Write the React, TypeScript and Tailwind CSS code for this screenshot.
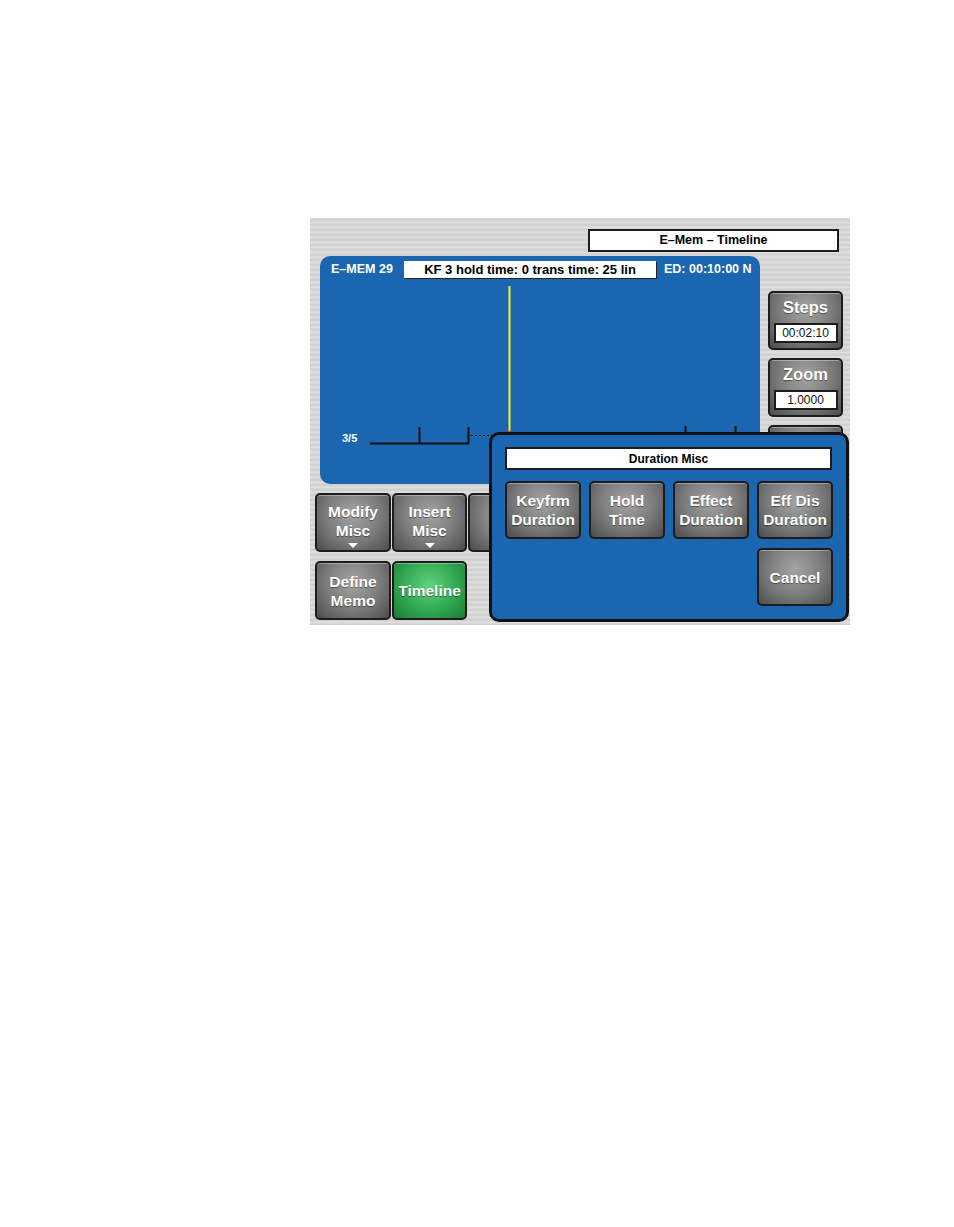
import React from "react";

const font = { fontFamily: '"Liberation Sans", Arial, sans-serif' };

type BtnProps = {
  lines: string[];
  green?: boolean;
  arrow?: boolean;
  className?: string;
};

function PanelButton({ lines, green, arrow, className = "" }: BtnProps) {
  const bg = green
    ? "bg-[radial-gradient(ellipse_at_50%_40%,#5fd37e_0%,#32a852_55%,#1c7a37_100%)]"
    : "bg-[radial-gradient(ellipse_at_50%_35%,#a4a4a4_0%,#7a7a7a_55%,#4c4c4c_100%)]";
  return (
    <div
      className={`relative flex flex-col items-center justify-center rounded-[5px] border-2 border-[#1c1c1c] ${bg} shadow-[inset_0_1px_0_rgba(255,255,255,0.35)] ${className}`}
    >
      {lines.map((l) => (
        <span
          key={l}
          className="text-[15.5px] font-bold leading-[19px] text-white [text-shadow:0_1px_1px_rgba(0,0,0,0.45)]"
        >
          {l}
        </span>
      ))}
      {arrow && (
        <span className="mt-[3px] h-0 w-0 border-x-[5px] border-t-[5px] border-x-transparent border-t-white" />
      )}
    </div>
  );
}

function ValueButton({ label, value }: { label: string; value: string }) {
  return (
    <div className="flex h-[59px] w-[75px] flex-col items-center rounded-[5px] border-2 border-[#1c1c1c] bg-[radial-gradient(ellipse_at_50%_30%,#a4a4a4_0%,#7a7a7a_55%,#4c4c4c_100%)] pt-[4px] shadow-[inset_0_1px_0_rgba(255,255,255,0.35)]">
      <span className="text-[16.5px] font-bold leading-[20px] text-white [text-shadow:0_1px_1px_rgba(0,0,0,0.45)]">
        {label}
      </span>
      <div className="mt-[6px] flex h-[20px] w-[64px] items-center justify-center border-2 border-[#1c1c1c] bg-white text-[12px] font-medium leading-none text-[#111]">
        {value}
      </div>
    </div>
  );
}

export default function App() {
  return (
    <div className="h-[1227px] w-[954px] bg-white pl-[310px] pt-[218px]" style={font}>
      <div className="relative h-[407px] w-[540px] overflow-hidden bg-[#d5d5d5] bg-[repeating-linear-gradient(180deg,#dadada_0px,#cdcdcd_2px,#d8d8d8_3px,#e0e0e0_5px)]">
        {/* title */}
        <div className="flex justify-end pr-[11px] pt-[11px]">
          <div className="flex h-[23px] w-[251px] items-center justify-center border-2 border-[#1c1c1c] bg-white text-[12.5px] font-bold text-black">
            E–Mem – Timeline
          </div>
        </div>

        {/* timeline + side buttons */}
        <div className="mt-[4px] flex items-start pl-[10px]">
          <div className="relative h-[228px] w-[440px] rounded-[10px] bg-[#1b66b0]">
            <div className="flex items-center pt-[4px] text-[12.5px] font-bold text-white">
              <span className="w-[84px] pl-[11px]">E–MEM 29</span>
              <div className="flex h-[17px] w-[252px] items-center justify-center bg-white text-[13px] text-black shadow-[1px_1px_0_#222]">
                KF 3 hold time: 0 trans time: 25 lin
              </div>
              <span className="pl-[8px]">ED: 00:10:00 N</span>
            </div>
            <span className="absolute left-[22px] top-[174px] text-[11px] font-bold text-white">3/5</span>
            <svg className="absolute inset-0" width="440" height="228" viewBox="0 0 440 228">
              <line x1="189.5" y1="30" x2="189.5" y2="178" stroke="#f4f41c" strokeWidth="2" />
              <circle cx="189.5" cy="176" r="1.5" fill="#d33" />
              <path d="M50 187.5 H149 M99.5 171 V188 M148.5 171 V188" stroke="#111" strokeWidth="2" fill="none" />
              <line x1="151" y1="179.5" x2="172" y2="179.5" stroke="#111" strokeWidth="1" strokeDasharray="2 2" />
              <path d="M365.5 170 V178 M415.5 170 V178" stroke="#111" strokeWidth="2" />
            </svg>
          </div>
          <div className="ml-[8px] flex flex-col gap-[8px] pt-[35px]">
            <ValueButton label="Steps" value="00:02:10" />
            <ValueButton label="Zoom" value="1.0000" />
            <PanelButton lines={[""]} className="h-[59px] w-[75px]" />
          </div>
        </div>

        {/* bottom buttons */}
        <div className="mt-[9px] flex flex-col gap-[9px] pl-[5px]">
          <div className="flex gap-[1px]">
            <PanelButton lines={["Modify", "Misc"]} arrow className="h-[59px] w-[76px] pt-[4px]" />
            <PanelButton lines={["Insert", "Misc"]} arrow className="h-[59px] w-[75px] pt-[4px]" />
            <PanelButton lines={[""]} className="h-[59px] w-[76px]" />
          </div>
          <div className="flex gap-[1px]">
            <PanelButton lines={["Define", "Memo"]} className="h-[59px] w-[76px]" />
            <PanelButton lines={["Timeline"]} green className="h-[59px] w-[75px]" />
          </div>
        </div>

        {/* Duration Misc dialog */}
        <div className="absolute left-[179px] top-[214px] h-[190px] w-[360px] rounded-[10px] border-[3px] border-[#111] bg-[#1b66b0] pl-[13px] pt-[12px]">
          <div className="flex h-[23px] w-[327px] items-center justify-center border-2 border-[#1c1c1c] bg-white text-[12px] font-bold text-black">
            Duration Misc
          </div>
          <div className="mt-[11px] grid grid-cols-[repeat(4,76px)] gap-x-[8px] gap-y-[9px]">
            <PanelButton lines={["Keyfrm", "Duration"]} className="h-[58px]" />
            <PanelButton lines={["Hold", "Time"]} className="h-[58px]" />
            <PanelButton lines={["Effect", "Duration"]} className="h-[58px]" />
            <PanelButton lines={["Eff Dis", "Duration"]} className="h-[58px]" />
            <PanelButton lines={["Cancel"]} className="col-start-4 h-[58px]" />
          </div>
        </div>
      </div>
    </div>
  );
}
